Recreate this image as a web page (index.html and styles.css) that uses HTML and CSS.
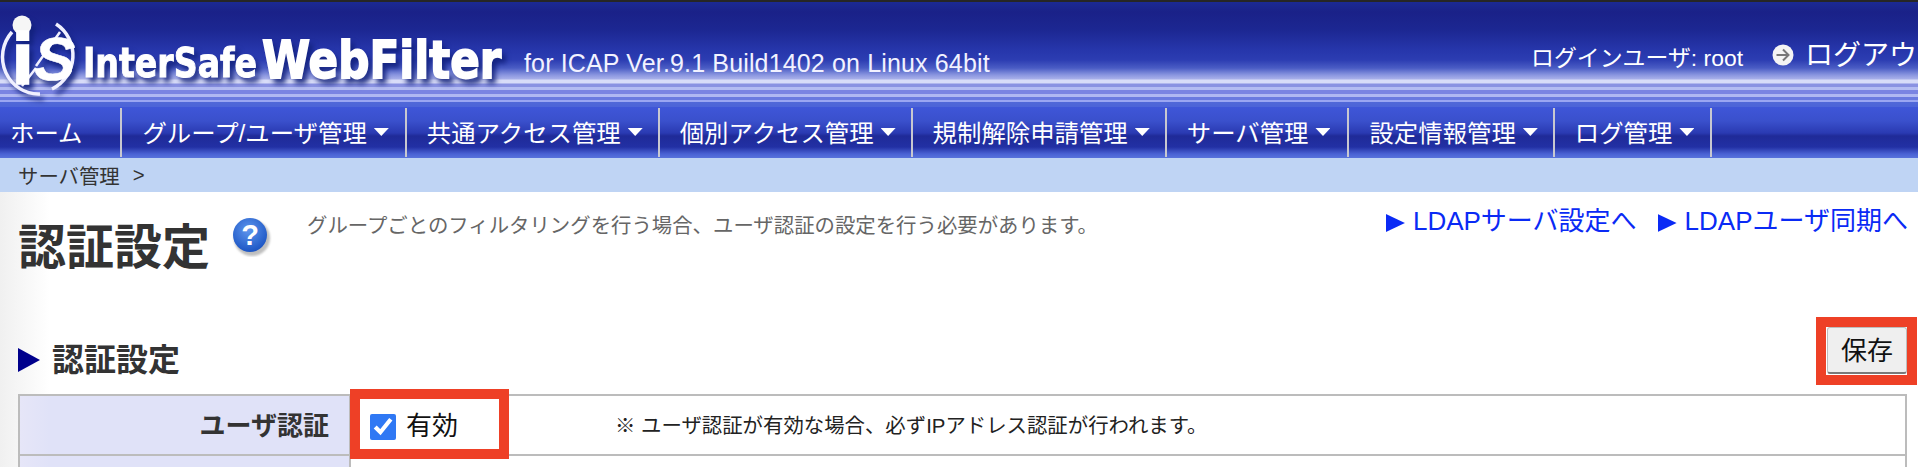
FILE: index.html
```html
<!DOCTYPE html>
<html lang="ja">
<head>
<meta charset="utf-8">
<title>認証設定</title>
<link rel="stylesheet" href="styles.css">
</head>
<body>
<header class="hdr">
  <svg class="logo" viewBox="0 0 520 105" width="520" height="105" aria-label="InterSafe WebFilter">
    <defs>
      <filter id="soft" x="-5%" y="-5%" width="110%" height="110%"><feGaussianBlur stdDeviation="0.6"/></filter>
    </defs>
    <g class="logo-glow">
      <g class="logo-main" filter="url(#soft)">
        <path class="ring" d="M56 22A36 37 0 0 1 52 87M40 92A36 37 0 0 1 12 30"/>
        <path class="ring-cut" d="M36 64L60 30M22 84L36 66"/>
        <circle class="dot" cx="22" cy="23" r="9.5"/>
        <text class="lg-i" x="13" y="81">i</text>
        <text class="lg-s" x="34" y="78">S</text>
        <text class="lg-a" transform="translate(83 75) scale(.81 1)">InterSafe</text>
        <text class="lg-b" transform="translate(262 76) scale(.84 1)">WebFilter</text>
      </g>
    </g>
  </svg>
  <span class="ver">for ICAP Ver.9.1 Build1402 on Linux 64bit</span>
  <span class="user">ログインユーザ: root</span>
  <svg class="out-ico" viewBox="0 0 22 22" width="22" height="22">
    <circle cx="11" cy="11" r="10.500" fill="#f4f4f4"/>
    <path d="M4.500 11h12M11 5.500l5.500 5.500-5.500 5.500" fill="none" stroke="#777" stroke-width="2"/>
  </svg>
  <span class="logout">ログアウト</span>
</header>
<nav class="nav">
  <a class="nav-item nav-home">ホーム</a>
  <a class="nav-item nav-pad1">グループ/ユーザ管理<i class="caret"></i></a>
  <a class="nav-item">共通アクセス管理<i class="caret"></i></a>
  <a class="nav-item">個別アクセス管理<i class="caret"></i></a>
  <a class="nav-item">規制解除申請管理<i class="caret"></i></a>
  <a class="nav-item nav-pad2">サーバ管理<i class="caret"></i></a>
  <a class="nav-item">設定情報管理<i class="caret"></i></a>
  <a class="nav-item nav-pad1">ログ管理<i class="caret"></i></a>
</nav>
<div class="crumb"><span>サーバ管理</span><span class="crumb-sep">&gt;</span></div>
<main class="main">
  <div class="top">
    <h1 class="title">認証設定</h1>
    <svg class="help" viewBox="0 0 40 40" width="40" height="40">
      <defs>
        <radialGradient id="hb" cx="45%" cy="35%" r="65%"><stop offset="0" stop-color="#5f97ee"/><stop offset="1" stop-color="#1c55c4"/></radialGradient>
        <filter id="hs" x="-20%" y="-20%" width="140%" height="140%"><feGaussianBlur stdDeviation="1.2"/></filter>
      </defs>
      <circle cx="20" cy="21" r="18" fill="#8a8a8a" opacity=".55" filter="url(#hs)"/>
      <circle cx="18" cy="18" r="17" fill="url(#hb)"/>
      <text class="help-q" x="18" y="28">?</text>
    </svg>
    <p class="desc">グループごとのフィルタリングを行う場合、ユーザ認証の設定を行う必要があります。</p>
    <div class="links">
      <a class="link"><i class="tri tri-link"></i>LDAPサーバ設定へ</a>
      <a class="link"><i class="tri tri-link"></i>LDAPユーザ同期へ</a>
    </div>
  </div>
  <div class="sec">
    <h2 class="sec-title"><i class="tri tri-sec"></i>認証設定</h2>
    <div class="save-mark"><button class="save" type="button">保存</button></div>
  </div>
  <div class="tbl">
    <div class="th">ユーザ認証</div>
    <div class="td">
      <label class="chk"><input type="checkbox" checked><span>有効</span></label>
      <span class="note">※ ユーザ認証が有効な場合、必ずIPアドレス認証が行われます。</span>
      <div class="mark"></div>
    </div>
    <div class="th th-last"></div>
    <div class="td td-last"></div>
  </div>
</main>
</body>
</html>
```
FILE: styles.css
```css
* { box-sizing: border-box; }
html, body { margin: 0; height: 467px; overflow: hidden; background: #fff; }
body { font-family: "Liberation Sans", "Noto Sans CJK JP", sans-serif; color: #333; }
h1, h2, p { margin: 0; }
a, i { font-style: normal; }

.hdr {
  height: 107px;
  display: flex;
  align-items: flex-start;
  overflow: hidden;
  border-top: 2px solid #262626;
  background: linear-gradient(180deg,
    #1b2a94 0, #1a2188 10px, #1c2792 28px, #2636ab 48px, #2c3db2 58px, #4a5cc4 66px, #8a96e0 73px, #a8b0ea 77px,
    #d8dcf8 78px, #d8dcf8 81px, #8a92e2 82px, #8a92e2 85px, #b4bcf2 85px, #b4bcf2 88px,
    #7a84e2 88px, #7a84e2 92px, #b0b8f2 92px, #b0b8f2 95px, #6a7ae0 95px, #6a7ae0 98px,
    #9aa6f2 98px, #9aa6f2 100px, #5068d8 100px, #4c64d8 105px);
  white-space: nowrap;
}
.logo { flex: none; display: block; overflow: hidden; }
.logo-glow { filter: drop-shadow(4px 5px 2.5px rgba(16, 32, 122, .85)); }
.logo-main text { fill: #fff; stroke: #fff; }
.ring { fill: none; stroke: #f0f0ff; stroke-width: 3.500; }
.ring-cut { fill: none; stroke: #f0f0ff; stroke-width: 2.500; }
.dot { fill: #f6f6f6; }
.lg-a { font: 700 41px "DejaVu Sans", sans-serif; stroke-width: 1; }
.lg-b { font: 700 52px "DejaVu Sans", sans-serif; stroke-width: 1.800; }
.lg-i { font: 700 70px "Liberation Sans", sans-serif; stroke-width: 3.500; }
.lg-s { font: italic 700 62px "Liberation Sans", sans-serif; stroke-width: .5; }

.ver { margin: 47px 0 0 4px; font-size: 25px; line-height: 28px; letter-spacing: .15px; color: #f2f2ff; }
.user { margin: 42px 0 0 auto; font-size: 22.900px; line-height: 28px; color: #fff; }
.out-ico { flex: none; margin: 42px 0 0 29px; filter: blur(.5px); }
.logout { flex: none; width: 113px; margin: 35px 0 0 11px; overflow: hidden; font-size: 28px; line-height: 38px; color: #fff; }

.nav {
  height: 51px;
  display: flex;
  background: linear-gradient(180deg, #3f56d8 0, #3a50cc 14px, #2a3ab2 26px, #1f2a98 29px, #2230a4 40px, #4a62d4 47px, #5872dc 51px);
  white-space: nowrap;
}
.nav-item {
  display: flex;
  align-items: center;
  height: 49px;
  margin-top: 1px;
  padding: 0 15px 3px 20px;
  border-right: 2px solid #c8c8d0;
  font-size: 24.400px;
  color: #fff;
}
.nav-home { padding: 0 38px 3px 10px; }
.nav-pad1 { padding-right: 16px; }
.nav-pad2 { padding-right: 17px; }
.caret {
  width: 15px;
  height: 8px;
  margin: 2px 0 0 7px;
  background: #fff;
  clip-path: polygon(0 0, 100% 0, 50% 100%);
  filter: blur(.4px);
}
.crumb {
  height: 34px;
  display: flex;
  align-items: center;
  padding-left: 18px;
  background: #bfd4f4;
  font-size: 20.400px;
  color: #333;
}
.crumb-sep { margin-left: 13px; }

.main {
  height: 275px;
  padding: 0 1px 0 18px;
  background: linear-gradient(90deg, #f0f0f0 0, #fff 50px);
}
.top { height: 125px; display: flex; align-items: flex-start; }
.title { margin-top: 26px; font-size: 48px; line-height: 60px; font-weight: 700; color: #333; }
.help { flex: none; margin: 25px 0 0 22px; }
.help-q { fill: #fff; font: 700 29px "Liberation Sans", sans-serif; text-anchor: middle; }
.desc { margin: 21px 0 0 35px; font-size: 20.400px; line-height: 26px; color: #666; white-space: nowrap; }
.links { margin: 9px 9px 0 auto; display: flex; gap: 21px; white-space: nowrap; }
.link { display: flex; align-items: center; font-size: 26px; line-height: 40px; color: #0a2af5; }
.tri { display: block; clip-path: polygon(0 0, 100% 50%, 0 100%); }
.tri-link { width: 19px; height: 18px; margin: 4px 8px 0 0; background: #0a2af5; }
.tri-sec { width: 22px; height: 24px; margin-right: 12px; background: #00008c; }

.sec { height: 77px; display: flex; justify-content: space-between; align-items: flex-start; }
.sec-title { display: flex; align-items: center; margin-top: 23px; font-size: 32px; line-height: 40px; font-weight: 700; color: #333; }
.save-mark { width: 101px; height: 68px; border: 10px solid #ee4026; display: flex; justify-content: flex-end; align-items: flex-start; }
.save {
  width: 80px;
  height: 47px;
  padding: 0 0 4px;
  border: 1px solid #bdbdbd;
  border-bottom: 2px solid #7a7a7a;
  border-radius: 3px;
  background: #efefef;
  font: 26px "Liberation Sans", "Noto Sans CJK JP", sans-serif;
  color: #111;
}

.tbl {
  margin-right: 10px;
  display: grid;
  grid-template-columns: 331px 1fr;
  grid-auto-rows: 60px;
  border: 2px solid #bcbcbc;
  border-bottom: 0;
}
.th {
  display: flex;
  justify-content: flex-end;
  align-items: center;
  padding: 0 20px 4px 0;
  border-right: 2px solid #bcbcbc;
  border-bottom: 2px solid #bcbcbc;
  background: linear-gradient(90deg, #e6e6f8 0, #e0e2f8 30px);
  font-size: 26px;
  font-weight: 700;
  color: #333;
}
.td {
  position: relative;
  display: flex;
  align-items: center;
  padding-bottom: 2px;
  border-bottom: 2px solid #bcbcbc;
  color: #111;
}
.th-last, .td-last { border-bottom: 0; }
.chk { display: flex; align-items: center; margin-left: 19px; font-size: 26px; }
.chk span { margin-top: -2px; }
.chk input { width: 26px; height: 26px; margin: 5px 10px 0 0; accent-color: #2f78f4; }
.note { margin-left: 157px; font-size: 20.400px; color: #222; }
.mark {
  position: absolute;
  left: -1px;
  top: -7px;
  width: 159px;
  height: 70px;
  border: 10px solid #ee4026;
}
```
